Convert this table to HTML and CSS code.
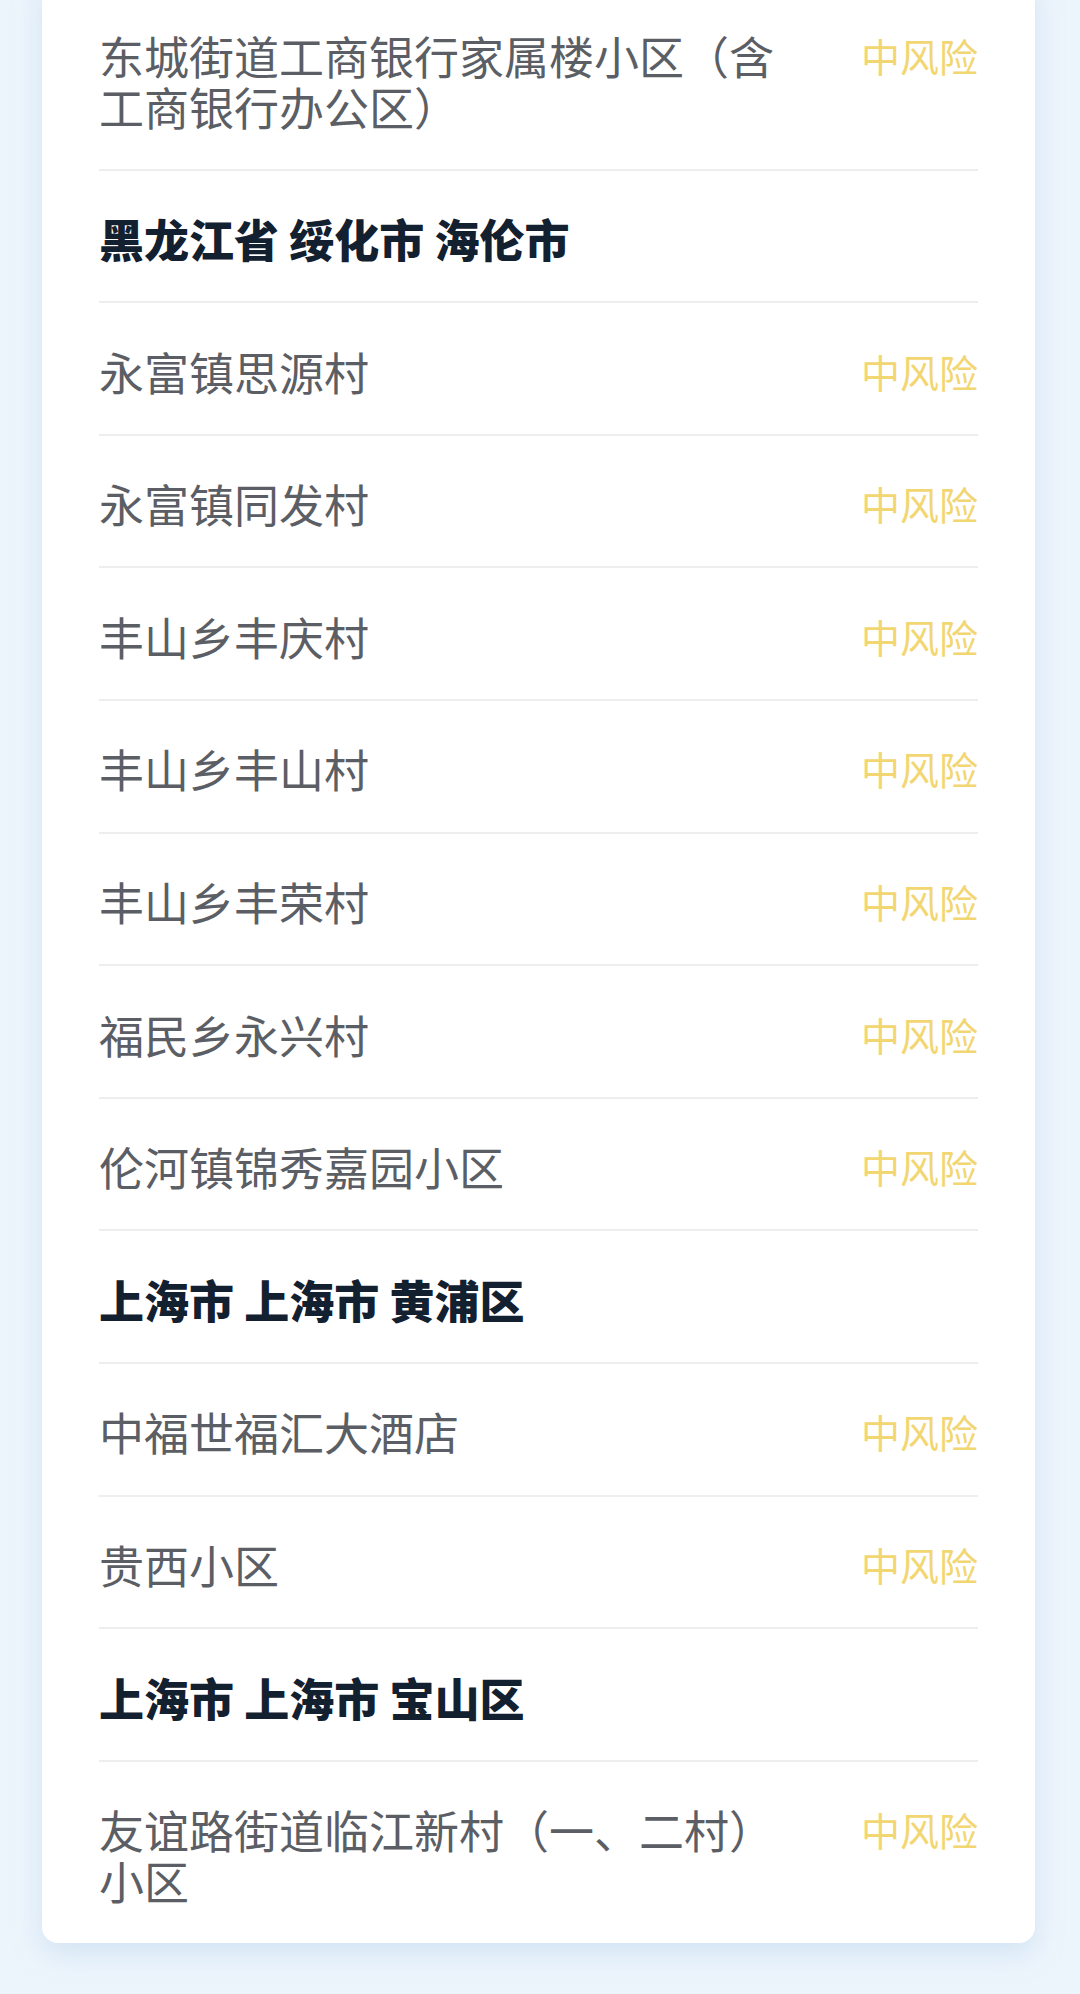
FILE: index.html
```html
<!DOCTYPE html>
<html lang="zh-CN">
<head>
<meta charset="utf-8">
<title>风险地区</title>
<link rel="stylesheet" href="styles.css">
</head>
<body>
<div class="page">
  <div class="card">
    <div class="row">
      <div class="name">东城街道工商银行家属楼小区（含工商银行办公区）</div>
      <div class="risk">中风险</div>
    </div>
    <div class="row head">
      <div class="name">黑龙江省 绥化市 海伦市</div>
    </div>
    <div class="row"><div class="name">永富镇思源村</div><div class="risk">中风险</div></div>
    <div class="row"><div class="name">永富镇同发村</div><div class="risk">中风险</div></div>
    <div class="row"><div class="name">丰山乡丰庆村</div><div class="risk">中风险</div></div>
    <div class="row"><div class="name">丰山乡丰山村</div><div class="risk">中风险</div></div>
    <div class="row"><div class="name">丰山乡丰荣村</div><div class="risk">中风险</div></div>
    <div class="row"><div class="name">福民乡永兴村</div><div class="risk">中风险</div></div>
    <div class="row"><div class="name">伦河镇锦秀嘉园小区</div><div class="risk">中风险</div></div>
    <div class="row head">
      <div class="name">上海市 上海市 黄浦区</div>
    </div>
    <div class="row"><div class="name">中福世福汇大酒店</div><div class="risk">中风险</div></div>
    <div class="row"><div class="name">贵西小区</div><div class="risk">中风险</div></div>
    <div class="row head">
      <div class="name">上海市 上海市 宝山区</div>
    </div>
    <div class="row last"><div class="name">友谊路街道临江新村（一、二村）小区</div><div class="risk">中风险</div></div>
  </div>
</div>
</body>
</html>
```

FILE: styles.css
```css
html, body {
  margin: 0;
  padding: 0;
}
body {
  background: #edf5fc;
  font-family: "Noto Sans CJK SC", "Noto Sans", sans-serif;
  overflow: hidden;
}
.page {
  padding: 0 45px 60px 42px;
}
.card {
  margin-top: -20px;
  background: #ffffff;
  border-radius: 0 0 16px 16px;
  box-shadow: 0 10px 28px rgba(160, 195, 228, 0.35);
  padding: 7px 57px 0 57px;
}
.row {
  display: flex;
  align-items: flex-start;
  gap: 61px;
  padding: 42.5px 0 37.1px;
  border-bottom: 2px solid #eeeeef;
}
.row.last {
  border-bottom: none;
}
.name {
  flex: 1;
  font-size: 45px;
  line-height: 51px;
  color: #5b5e64;
}
.risk {
  flex: none;
  font-size: 39px;
  line-height: 51px;
  color: #f2d672;
}
.row.head .name {
  font-size: 45px;
  font-weight: 900;
  color: #13202f;
}
```
